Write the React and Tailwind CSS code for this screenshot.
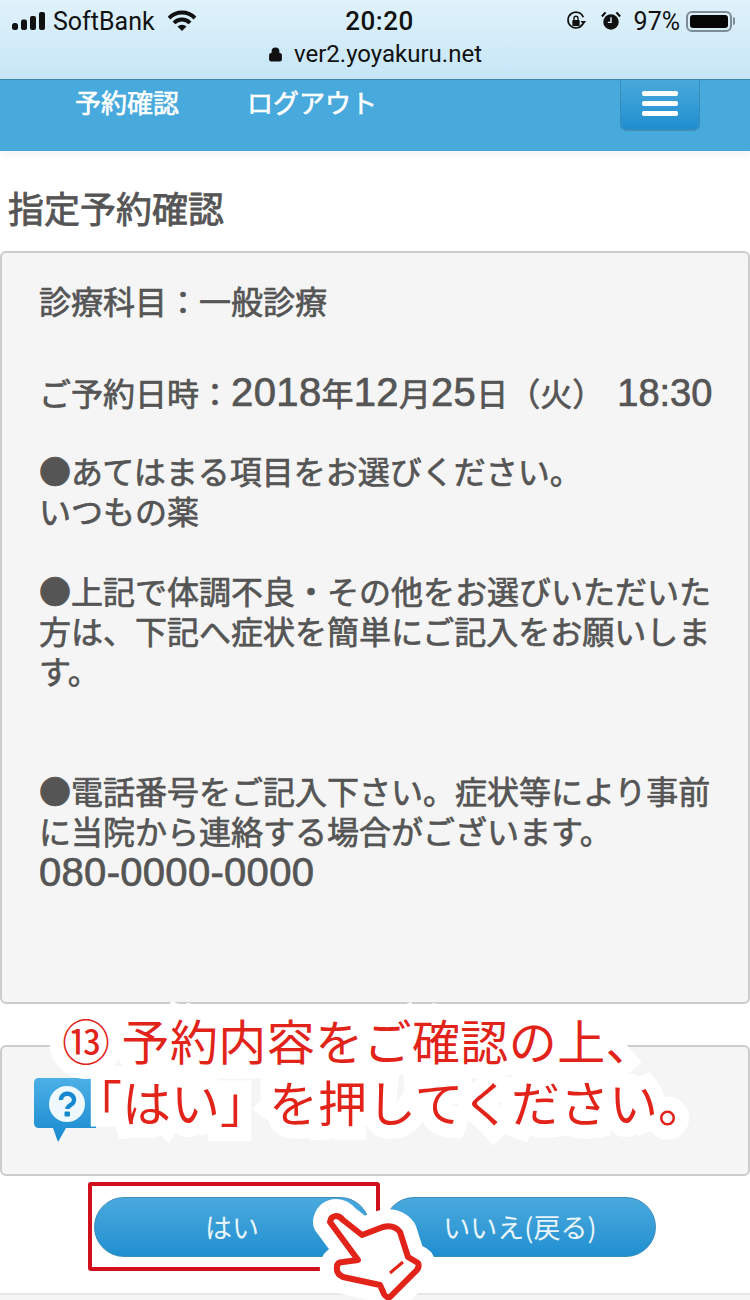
import React from "react";
import { Lock } from "lucide-react";

const jpFont = "font-['Noto_Sans_CJK_JP',sans-serif]";
const semiBold = "[-webkit-text-stroke:0.7px_#555]";

const StatusBar = () => (
    <div className="h-[80px] bg-gradient-to-b from-[#e0f2fb] to-[#c6e6f6] border-b border-[#3f8bb0] font-['Roboto',sans-serif] text-[#111]">
        <div className="h-[42px] pl-[12px] pr-[15px] flex items-center">
            <div className="flex-1 flex items-center">
                <svg width="34" height="18" viewBox="0 0 34 18" className="mr-[7px]">
                    <rect x="0" y="11" width="6" height="7" rx="2.5" fill="#111" />
                    <rect x="9" y="7.5" width="6" height="10.5" rx="2" fill="#111" />
                    <rect x="18" y="4" width="6" height="14" rx="2" fill="#111" />
                    <rect x="27" y="0" width="6" height="18" rx="2" fill="#111" />
                </svg>
                <span className="text-[25px] leading-none">SoftBank</span>
                <svg width="28" height="22" viewBox="0 0 28 22" className="ml-[13px]">
                    <path d="M1 8 A18 18 0 0 1 27 8" fill="none" stroke="#111" strokeWidth="4" />
                    <path d="M6 13 A11 11 0 0 1 22 13" fill="none" stroke="#111" strokeWidth="4" />
                    <path d="M9.5 16.5 A6.5 6.5 0 0 1 18.5 16.5 L14 21 Z" fill="#111" />
                </svg>
            </div>
            <span className="ml-[12px] text-[26px] font-medium leading-[28px] tracking-[0.5px]">20:20</span>
            <div className="flex-1 flex items-center justify-end">
                <svg width="22" height="22" viewBox="0 0 24 24" className="mr-[14px]">
                    <path d="M19.5 15 A8.6 8.6 0 1 1 20 8" fill="none" stroke="#111" strokeWidth="1.8" />
                    <path d="M17 12 L23 12 L20 16 Z" fill="#111" />
                    <rect x="8" y="11" width="8" height="6.5" rx="1" fill="#111" />
                    <path d="M9.8 11 V9 a2.2 2.2 0 0 1 4.4 0 V11" fill="none" stroke="#111" strokeWidth="1.5" />
                </svg>
                <svg width="20" height="20" viewBox="0 0 22 22" className="mr-[13px]">
                    <circle cx="11" cy="12" r="8.5" fill="#111" />
                    <path d="M11 7 V12.5 H7.5" fill="none" stroke="#e0f2fb" strokeWidth="1.6" />
                    <path d="M1 6 L5 1.5 M21 6 L17 1.5" stroke="#111" strokeWidth="2.4" />
                </svg>
                <span className="text-[25px] leading-none mr-[6px]">97%</span>
                <div className="w-[46px] h-[21px] border-[2px] border-[#7d8b94] rounded-[6px] p-[2px]">
                    <div className="w-full h-full bg-[#050505] rounded-[3px]"></div>
                </div>
                <div className="w-[2px] h-[8px] bg-[#7d8b94] rounded-r-sm ml-[1px]"></div>
            </div>
        </div>
        <div className="flex items-center justify-center gap-[11px] h-[24px]">
            <Lock size={15} fill="#111" strokeWidth={2.5} />
            <span className="text-[24px] leading-none">ver2.yoyakuru.net</span>
        </div>
    </div>
);

const NavBar = () => (
    <div className={`h-[71px] bg-[#48a9dc] shadow-[0_3px_8px_rgba(0,0,0,0.06)] flex items-start px-[75px] text-white text-[26px] leading-[44px] [-webkit-text-stroke:0.6px_white] ${jpFont}`}>
        <span>予約確認</span>
        <span className="ml-[68px]">ログアウト</span>
        <div className="ml-auto -mr-[25px] w-[80px] h-[51px] rounded-b-[7px] bg-gradient-to-b from-[#48a9dc] to-[#1f8fd0] border-b-2 border-x border-[#3a8dbb] flex flex-col gap-[5px] items-center pt-[11px]">
            <div className="w-[36px] h-[5px] bg-white rounded-[2px]"></div>
            <div className="w-[36px] h-[5px] bg-white rounded-[2px]"></div>
            <div className="w-[36px] h-[5px] bg-white rounded-[2px]"></div>
        </div>
    </div>
);

const Line = ({ className = "", children }) => <p className={`h-[40px] leading-[40px] whitespace-nowrap ${className}`}>{children}</p>;

const Num = ({ className = "text-[40px] tracking-[0.4px]", children }) => (
    <span className={`font-['Liberation_Sans',sans-serif] ${className}`}>{children}</span>
);

const PillButton = ({ className = "", children }) => (
    <button className={`h-[60px] rounded-full bg-gradient-to-b from-[#49a9dd] to-[#1f8fd0] border border-[#3a8dbb] text-[#e8f5fb] text-[27px] ${jpFont} ${className}`}>
        {children}
    </button>
);

const QuestionBubble = () => (
    <svg width="62" height="64" viewBox="0 0 62 64">
        <defs>
            <linearGradient id="bubbleFill" x1="0" y1="0" x2="0" y2="1">
                <stop offset="0" stopColor="#4cb0e6" />
                <stop offset="1" stopColor="#1788cf" />
            </linearGradient>
        </defs>
        <path d="M5 0 H62 V50 H32 L24 64 L19 50 H5 Q0 50 0 45 V5 Q0 0 5 0 Z" fill="url(#bubbleFill)" />
        <circle cx="33" cy="26" r="18" fill="#eef8fd" />
        <path d="M27 22 a6.5 6 0 1 1 9.5 5 q-3 2 -3 4" fill="none" stroke="#1788cf" strokeWidth="4.5" />
        <rect x="30.5" y="33.5" width="5.5" height="5" rx="1" fill="#1788cf" />
    </svg>
);

const handPath =
    "M20 32 C21 25 28 24 33 30 L52 45 L73 37 Q84 34 90 42 L98 67 L108 73 Q110 77 106 81 L80 107 Q76 108 74 104 L70 95 L33 87 Q26 84 27 77 Q27 72 33 72 L48 70 Z";

const HandPointer = () => (
    <svg width="130" height="115" viewBox="0 0 130 115" className="absolute left-[310px] top-[1190px] overflow-visible">
        <path d={handPath} fill="white" stroke="white" strokeWidth="34" strokeLinejoin="round" />
        <path d={handPath} fill="white" stroke="#e2231a" strokeWidth="6" strokeLinejoin="round" />
        <path d="M80 83 L93 72" stroke="#e2231a" strokeWidth="3" />
    </svg>
);

const NoteText = ({ className = "" }) => (
    <div className={`absolute left-[62px] top-[1008px] leading-[62px] whitespace-nowrap ${jpFont} ${className}`}>
        <p className="text-[48px] tracking-[0.4px]">⑬ 予約内容をご確認の上、</p>
        <p className="text-[49px] ml-[11px]">「はい」を押してください。</p>
    </div>
);

const App = () => {
    return (
        <div className={`relative w-[750px] h-[1300px] overflow-hidden bg-white text-[#555] ${jpFont}`}>
            <StatusBar />
            <NavBar />

            <h2 className="mt-[34px] pl-[8px] text-[36px] leading-[44px] [-webkit-text-stroke:0.8px_#555]">指定予約確認</h2>

            {/* 予約内容 */}
            <div className={`mt-[22px] h-[753px] bg-[#f5f5f5] border-2 border-[#ccc] rounded-[6px] pl-[37px] pt-[27px] text-[32px] ${semiBold}`}>
                <Line className="mb-[52px]">診療科目：一般診療</Line>
                <Line className="mb-[38px]">
                    ご予約日時：<Num>2018</Num>年<Num>12</Num>月<Num>25</Num>日（火）<Num className="text-[38px] ml-[13px]">18:30</Num>
                </Line>
                <Line>●あてはまる項目をお選びください。</Line>
                <Line className="mb-[40px]">いつもの薬</Line>
                <Line>●上記で体調不良・その他をお選びいただいた</Line>
                <Line>方は、下記へ症状を簡単にご記入をお願いしま</Line>
                <Line className="mb-[80px]">す。</Line>
                <Line>●電話番号をご記入下さい。症状等により事前</Line>
                <Line>に当院から連絡する場合がございます。</Line>
                <Line className="mt-[2px]"><Num className="text-[40px] tracking-[0.3px]">080-0000-0000</Num></Line>
            </div>

            {/* 確認メッセージ */}
            <div className="mt-[41px] h-[131px] bg-[#f5f5f5] border-2 border-[#ccc] rounded-[6px] pl-[32px] pt-[31px]">
                <QuestionBubble />
            </div>

            <div className="mt-[21px] flex pl-[94px] gap-[14px]">
                <PillButton className="w-[276px]">はい</PillButton>
                <PillButton className="w-[272px]">いいえ(戻る)</PillButton>
            </div>

            <div className="mt-[36px] h-[7px] bg-[#f5f5f5] border-t-2 border-[#e6e6e6]"></div>

            {/* 赤い注釈 */}
            <div className="absolute left-[88px] top-[1182px] w-[292px] h-[89px] border-[4px] border-[#d0101c] rounded-[3px]"></div>
            <NoteText className="text-white [-webkit-text-stroke:28px_white]" />
            <NoteText className="text-[#e2231a]" />
            <HandPointer />
        </div>
    );
};

export default App;
